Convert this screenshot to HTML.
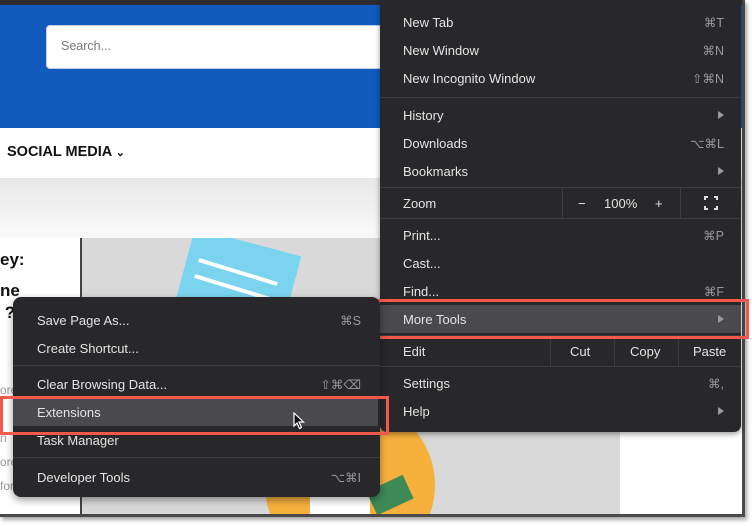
<!DOCTYPE html>
<html style="overflow:hidden"><head><meta charset="utf-8"><style>
*{margin:0;padding:0;box-sizing:border-box}
html,body{width:752px;height:526px;overflow:hidden}
body{background:#fff;font-family:"Liberation Sans",sans-serif;position:relative}
.abs{position:absolute}
.menu{background:#28282b;color:#e3e3e3;font-size:13px}
.it{position:absolute;left:0;right:0;height:28px;line-height:30px}
.it .t{position:absolute}
.it .k{position:absolute;color:#9a9a9c;font-size:12.5px}
.sep{position:absolute;left:0;right:0;height:1px;background:#3c3c40}
.arr{position:absolute;width:0;height:0;border-left:6px solid #9a9a9c;border-top:4px solid transparent;border-bottom:4px solid transparent}
.red{position:absolute;border:3px solid #f4574b}
</style></head><body>
<div class="abs" style="left:0;top:0;width:745px;height:517px;background:#fff;box-shadow:2px 3px 4px rgba(0,0,0,.35);border-right:3px solid #4a4a4a;border-bottom:3px solid #4a4a4a"></div>
<div class="abs" style="left:0;top:0;width:742px;height:5px;background:#2c2c2e"></div>
<div class="abs" style="left:0;top:5px;width:742px;height:123px;background:#115bbf"></div>
<div class="abs" style="left:46px;top:25px;width:340px;height:44px;background:#fff;border-radius:4px;border:1px solid #ccd"></div>
<div class="abs" style="left:61px;top:39px;font-size:12.5px;color:#777">Search...</div>
<div class="abs" style="left:0;top:128px;width:742px;height:50px;background:#fff"></div>
<div class="abs" style="left:7px;top:144px;font-size:14.5px;font-weight:bold;color:#111">SOCIAL MEDIA <span style="font-size:11px">⌄</span></div>
<div class="abs" style="left:0;top:178px;width:742px;height:60px;background:linear-gradient(#e8e8e8,#fafafa)"></div>
<div class="abs" style="left:0;top:238px;width:81px;height:276px;background:#fff"></div>
<div class="abs" style="left:80px;top:238px;width:2px;height:276px;background:#444"></div>
<div class="abs" style="left:82px;top:238px;width:538px;height:276px;background:#d9d9d9;overflow:hidden">
 <div class="abs" style="left:113px;top:-10px;width:110px;height:90px;background:#7bd4ef;transform:rotate(15deg);transform-origin:0 0"></div>
 <div class="abs" style="left:115px;top:32px;width:82px;height:4px;background:#fff;transform:rotate(17deg)"></div>
 <div class="abs" style="left:111px;top:48px;width:82px;height:4px;background:#fff;transform:rotate(17deg)"></div>
 <div class="abs" style="left:183px;top:162px;width:170px;height:170px;border-radius:50%;background:#f6b03c"></div>
 <div class="abs" style="left:228px;top:236px;width:60px;height:60px;background:#fff"></div>
 <div class="abs" style="left:288px;top:244px;width:40px;height:26px;background:#3d8a55;transform:rotate(-25deg)"></div>
</div>
<div class="abs" style="left:620px;top:238px;width:122px;height:276px;background:#fff"></div>
<div class="abs" style="left:0;top:250px;font-size:17px;font-weight:bold;color:#111">ey:</div>
<div class="abs" style="left:0;top:280px;font-size:17px;font-weight:bold;color:#111;line-height:22px">ne<br>&nbsp;?</div>
<div class="abs" style="left:0;top:378px;font-size:12px;color:#999;line-height:24px">ore<br>i<br>n<br>ore<br>for</div>

<div class="abs menu" style="left:380px;top:0;width:361px;height:432px;border-radius:0 0 7px 7px;box-shadow:0 2px 6px rgba(0,0,0,.4)">
 <div class="it" style="top:8px"><span class="t" style="left:23px">New Tab</span><span class="k" style="right:17px">⌘T</span></div>
 <div class="it" style="top:36px"><span class="t" style="left:23px">New Window</span><span class="k" style="right:17px">⌘N</span></div>
 <div class="it" style="top:64px"><span class="t" style="left:23px">New Incognito Window</span><span class="k" style="right:17px">⇧⌘N</span></div>
 <div class="sep" style="top:97px"></div>
 <div class="it" style="top:101px"><span class="t" style="left:23px">History</span></div><div class="arr" style="right:17px;top:111px"></div>
 <div class="it" style="top:129px"><span class="t" style="left:23px">Downloads</span><span class="k" style="right:17px">⌥⌘L</span></div>
 <div class="it" style="top:157px"><span class="t" style="left:23px">Bookmarks</span></div><div class="arr" style="right:17px;top:167px"></div>
 <div class="sep" style="top:187px"></div>
 <div class="it" style="top:189px"><span class="t" style="left:23px">Zoom</span><span class="t" style="left:198px">−</span><span class="t" style="left:224px">100%</span><span class="t" style="left:275px">+</span></div>
 <div class="abs" style="left:182px;top:187px;width:1px;height:31px;background:#3c3c40"></div>
 <div class="abs" style="left:300px;top:187px;width:1px;height:31px;background:#3c3c40"></div>
 <div class="abs" style="left:324px;top:196px;width:14px;height:14px;border:2px solid #ddd"></div>
 <div class="abs" style="left:328px;top:194px;width:6px;height:18px;background:#28282b"></div>
 <div class="abs" style="left:322px;top:200px;width:18px;height:6px;background:#28282b"></div>
 <div class="sep" style="top:218px"></div>
 <div class="it" style="top:221px"><span class="t" style="left:23px">Print...</span><span class="k" style="right:17px">⌘P</span></div>
 <div class="it" style="top:249px"><span class="t" style="left:23px">Cast...</span></div>
 <div class="it" style="top:277px"><span class="t" style="left:23px">Find...</span><span class="k" style="right:17px">⌘F</span></div>
 <div class="it" style="top:305px;background:#4a4a4e"><span class="t" style="left:23px">More Tools</span></div><div class="arr" style="right:17px;top:315px"></div>
 <div class="sep" style="top:335px"></div>
 <div class="it" style="top:337px"><span class="t" style="left:23px">Edit</span><span class="t" style="left:190px">Cut</span><span class="t" style="left:250px">Copy</span><span class="t" style="left:313px">Paste</span></div>
 <div class="abs" style="left:170px;top:335px;width:1px;height:31px;background:#3c3c40"></div>
 <div class="abs" style="left:234px;top:335px;width:1px;height:31px;background:#3c3c40"></div>
 <div class="abs" style="left:298px;top:335px;width:1px;height:31px;background:#3c3c40"></div>
 <div class="sep" style="top:366px"></div>
 <div class="it" style="top:369px"><span class="t" style="left:23px">Settings</span><span class="k" style="right:17px">⌘,</span></div>
 <div class="it" style="top:397px"><span class="t" style="left:23px">Help</span></div><div class="arr" style="right:17px;top:407px"></div>
</div>
<div class="red" style="left:369px;top:299px;width:380px;height:40px"></div>

<div class="abs menu" style="left:13px;top:297px;width:367px;height:200px;border-radius:8px;box-shadow:0 3px 8px rgba(0,0,0,.4)">
 <div class="it" style="top:9px"><span class="t" style="left:24px">Save Page As...</span><span class="k" style="right:19px">⌘S</span></div>
 <div class="it" style="top:37px"><span class="t" style="left:24px">Create Shortcut...</span></div>
 <div class="sep" style="top:68px"></div>
 <div class="it" style="top:73px"><span class="t" style="left:24px">Clear Browsing Data...</span><span class="k" style="right:19px">⇧⌘⌫</span></div>
 <div class="it" style="top:101px;right:2px;background:#4a4a4e"><span class="t" style="left:24px">Extensions</span></div>
 <div class="it" style="top:129px"><span class="t" style="left:24px">Task Manager</span></div>
 <div class="sep" style="top:160px"></div>
 <div class="it" style="top:166px"><span class="t" style="left:24px">Developer Tools</span><span class="k" style="right:19px">⌥⌘I</span></div>
</div>
<div class="red" style="left:0;top:396px;width:389px;height:39px"></div>
<svg class="abs" style="left:293px;top:412px" width="12" height="18" viewBox="0 0 12 18"><path d="M1 1 L1 14 L4 11 L6.5 16.5 L8.5 15.5 L6 10 L10.5 10 Z" fill="#111" stroke="#fff" stroke-width="1.2"/></svg>
</body></html>
